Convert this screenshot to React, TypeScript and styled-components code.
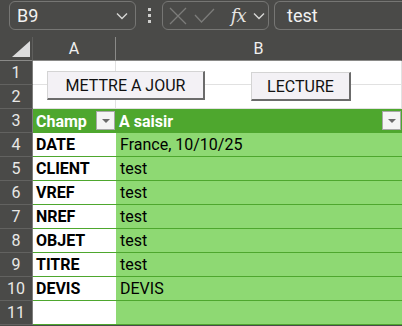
import styled, { createGlobalStyle } from "styled-components";

const GlobalStyle = createGlobalStyle`
  html, body {
    margin: 0;
    padding: 0;
    background: #4a4a48;
  }
  * {
    box-sizing: border-box;
  }
`;

const rows = [
  { label: "DATE", value: "France, 10/10/25" },
  { label: "CLIENT", value: "test" },
  { label: "VREF", value: "test" },
  { label: "NREF", value: "test" },
  { label: "OBJET", value: "test" },
  { label: "TITRE", value: "test" },
  { label: "DEVIS", value: "DEVIS" },
  { label: "", value: "" },
];

export default function App() {
  return (
    <Screen>
      <GlobalStyle />
      <FormulaBar>
        <NameBox>
          <span>B9</span>
          <Chevron />
        </NameBox>
        <Dots>
          <i />
          <i />
          <i />
        </Dots>
        <FuncBox>
          <svg width="18" height="18" viewBox="0 0 18 18">
            <path d="M1 1 L17 17 M17 1 L1 17" stroke="#7c7c7a" strokeWidth="1.3" fill="none" />
          </svg>
          <svg width="21" height="15" viewBox="0 0 21 15">
            <path d="M1 7 L7.5 14 L20 1" stroke="#7c7c7a" strokeWidth="1.3" fill="none" />
          </svg>
          <Fx>fx</Fx>
          <Chevron />
        </FuncBox>
        <InputBox>test</InputBox>
      </FormulaBar>

      <Sheet>
        <Row>
          <Corner>
            <svg width="18" height="16" viewBox="0 0 18 16">
              <path d="M0 16 L18 0 L18 16 Z" fill="#dcdcdc" />
            </svg>
          </Corner>
          <ColHead>A</ColHead>
          <ColHead $last>B</ColHead>
        </Row>

        <Row>
          <RowHead>1</RowHead>
          <PlainCell />
          <PlainCell />
        </Row>
        <Row>
          <RowHead>2</RowHead>
          <PlainCell />
          <PlainCell />
        </Row>
        <Row>
          <RowHead>3</RowHead>
          <TableHead>
            Champ
            <FilterButton>
              <Arrow />
            </FilterButton>
          </TableHead>
          <TableHead>
            A saisir
            <FilterButton>
              <Arrow />
            </FilterButton>
          </TableHead>
        </Row>
        {rows.map((r, i) => (
          <Row key={i}>
            <RowHead>{i + 4}</RowHead>
            <LabelCell>{r.label}</LabelCell>
            <ValueCell>{r.value}</ValueCell>
          </Row>
        ))}

        <SheetButton style={{ left: 47, top: 34, width: 158 }}>METTRE A JOUR</SheetButton>
        <SheetButton style={{ left: 251, top: 35, width: 100 }}>LECTURE</SheetButton>
      </Sheet>
    </Screen>
  );
}

function Chevron() {
  return (
    <svg width="12" height="8" viewBox="0 0 12 8">
      <path d="M1 1.5 L6 6.5 L11 1.5" stroke="#d6d6d4" strokeWidth="1.4" fill="none" />
    </svg>
  );
}

const Screen = styled.div`
  width: 402px;
  height: 326px;
  overflow: hidden;
  background: #4a4a48;
  font-family: Roboto, "Liberation Sans", sans-serif;
`;

const FormulaBar = styled.div`
  height: 37px;
  display: flex;
  align-items: flex-start;
  padding: 1px 0 0 9px;
`;

const Box = styled.div`
  height: 29px;
  border: 1px solid #767674;
  border-radius: 6px;
  display: flex;
  align-items: center;
  color: #f2f2f2;
  font-size: 18px;
`;

const NameBox = styled(Box)`
  width: 127px;
  padding: 0 7px 0 7px;
  justify-content: space-between;
`;

const Dots = styled.div`
  width: 26px;
  height: 29px;
  display: flex;
  flex-direction: column;
  align-items: center;
  justify-content: center;
  gap: 3px;

  i {
    width: 3px;
    height: 3px;
    background: #cfcfcd;
  }
`;

const FuncBox = styled(Box)`
  width: 107px;
  padding: 0 3px 0 6px;
  justify-content: space-between;
`;

const Fx = styled.span`
  font-family: "DejaVu Serif", "Liberation Serif", serif;
  font-style: italic;
  font-size: 18px;
  color: #e4e4e2;
  margin-left: 8px;
  letter-spacing: -1px;
`;

const InputBox = styled(Box)`
  flex: 1;
  margin-left: 5px;
  padding-left: 12px;
  border-right: none;
  border-radius: 6px 0 0 6px;
`;

const Sheet = styled.div`
  position: relative;
`;

const Row = styled.div`
  display: grid;
  grid-template-columns: 33px 83px 1fr;
  height: 24px;
`;

const Corner = styled.div`
  border-right: 1px solid #5e5e5c;
  border-bottom: 1px solid #8a8a88;
  display: flex;
  align-items: flex-end;
  justify-content: flex-end;
  padding: 0 2px 3px 0;
`;

const ColHead = styled.div<{ $last?: boolean }>`
  border-right: 1px solid ${(p) => (p.$last ? "transparent" : "#8a8a88")};
  border-bottom: 1px solid #8a8a88;
  color: #f0f0f0;
  font-size: 16px;
  display: flex;
  align-items: center;
  justify-content: center;
`;

const RowHead = styled.div`
  background: #4a4a48;
  border-right: 1px solid #7e7e7c;
  border-bottom: 1px solid #626260;
  color: #e8e8e6;
  font-size: 16px;
  display: flex;
  align-items: center;
  justify-content: center;
`;

const PlainCell = styled.div`
  background: #ffffff;
  border-right: 1px solid #e1e1e1;
  border-bottom: 1px solid #e1e1e1;
`;

const TableHead = styled.div`
  position: relative;
  background: #4ea72e;
  color: #ffffff;
  font-weight: 700;
  font-size: 16px;
  display: flex;
  align-items: center;
  padding-left: 3px;
`;

const FilterButton = styled.div`
  position: absolute;
  right: 1px;
  top: 2px;
  width: 19px;
  height: 19px;
  background: #f4f4f4;
  border: 1px solid #a8a8a8;
  display: flex;
  align-items: center;
  justify-content: center;
`;

const Arrow = styled.div`
  width: 0;
  height: 0;
  border-left: 4px solid transparent;
  border-right: 4px solid transparent;
  border-top: 4px solid #6a6a6a;
`;

const DataCell = styled.div`
  border-bottom: 1px solid #4ea72e;
  color: #000000;
  font-size: 16px;
  display: flex;
  align-items: center;
  white-space: nowrap;
  overflow: hidden;
`;

const LabelCell = styled(DataCell)`
  background: #ffffff;
  font-weight: 700;
  padding-left: 3px;
`;

const ValueCell = styled(DataCell)`
  background: #8ed973;
  padding-left: 4px;
`;

const SheetButton = styled.div`
  position: absolute;
  height: 29px;
  background: #f3f1f5;
  border: 1px solid #d4d4d4;
  border-right: 2px solid #6b6b6b;
  border-bottom: 2px solid #6b6b6b;
  color: #111111;
  font-size: 16px;
  display: flex;
  align-items: center;
  justify-content: center;
`;
